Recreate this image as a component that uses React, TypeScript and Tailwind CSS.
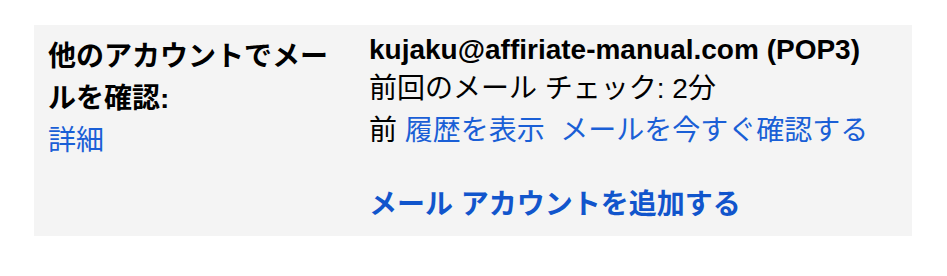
import React from 'react';

const font = { fontFamily: '"Liberation Sans", "Noto Sans CJK JP", sans-serif' };

const App: React.FC = () => {
  return (
    <div className="w-[947px] h-[276px] bg-white pt-[25px]" style={font}>
      {/* settings row */}
      <div className="ml-[34px] w-[878px] h-[211px] bg-[#f4f4f4] flex pl-[14px] pt-[11px] text-[28px] text-black">
        {/* label column */}
        <div className="w-[321px] shrink-0 pr-[21px]">
          <div className="font-bold leading-[42px]">他のアカウントでメールを確認:</div>
          <div className="leading-[42px]">
            <a href="#" className="text-[#1a5fd6]">詳細</a>
          </div>
        </div>

        {/* value column */}
        <div className="flex-1">
          <div className="font-bold leading-[28px] mb-[4px]">kujaku@affiriate-manual.com (POP3)</div>
          <div className="leading-[42px]">
            <div>前回のメール チェック: 2分</div>
            <div className="whitespace-nowrap">
              前 <a href="#" className="text-[#1a5fd6]">履歴を表示</a>
              {'\u00a0 '}
              <a href="#" className="text-[#1a5fd6]">メールを今すぐ確認する</a>
            </div>
          </div>
          <div className="mt-[32px] leading-[42px]">
            <a href="#" className="font-bold text-[#1155cc]">メール アカウントを追加する</a>
          </div>
        </div>
      </div>
    </div>
  );
};

export default App;
